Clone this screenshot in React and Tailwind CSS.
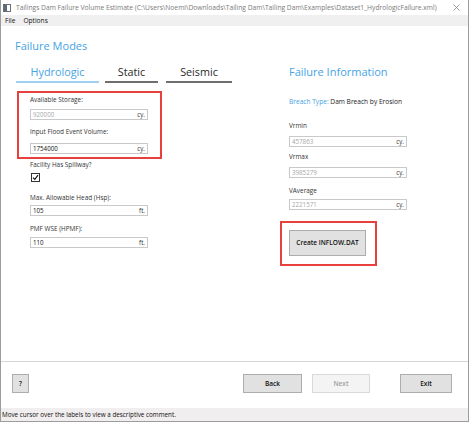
import React from "react";

const F = { fontFamily: '"Open Sans", "Noto Sans", sans-serif' };

function Input({ value, unit, disabled, w = "w-[118px]" }) {
  return (
    <div className={`${w} h-[11px] border border-[#c9c9c9] bg-white flex items-center justify-between px-[2px]`}>
      <span className={`text-[6.2px] leading-[8px] ${disabled ? "text-[#a6a6a6]" : "text-[#111]"}`}>{value}</span>
      <span className="text-[6.2px] leading-[8px] text-[#333]">{unit}</span>
    </div>
  );
}

function Label({ children, className = "" }) {
  return <div className={`text-[6.4px] leading-[8px] h-[8px] text-[#333] whitespace-nowrap ${className}`}>{children}</div>;
}

function Btn({ children, className = "", disabled }) {
  return (
    <div
      className={`h-[19px] flex items-center justify-center text-[6.5px] font-semibold border ${
        disabled ? "bg-[#f4f4f4] border-[#d9d9d9] text-[#a0a0a0] font-normal" : "bg-[#e1e1e1] border-[#adadad] text-[#111]"
      } ${className}`}
    >
      {children}
    </div>
  );
}

export default function App() {
  return (
    <div style={F} className="w-[469px] h-[422px] bg-white border-l border-r border-b border-[#9c9c9c] flex flex-col overflow-hidden">
      {/* Title bar */}
      <div className="h-[15px] flex items-center shrink-0 relative">
        <svg width="8" height="8" viewBox="0 0 8 8" className="ml-[2px]">
          <rect x="0.5" y="0.5" width="7" height="7" fill="#fff" stroke="#6d6d6d" />
          <rect x="1" y="1" width="3" height="6" fill="#5a6b7d" />
        </svg>
        <div className="ml-[5px] text-[6.7px] leading-[8px] text-[#7a7a7a] whitespace-nowrap">
          Tailings Dam Failure Volume Estimate (C:\Users\Noemi\Downloads\Tailing Dam\Tailing Dam\Examples\Dataset1_HydrologicFailure.xml)
        </div>
        <svg width="7" height="7" viewBox="0 0 7 7" className="absolute right-[8px] top-[4px]">
          <path d="M0.5 0.5 L6.5 6.5 M6.5 0.5 L0.5 6.5" stroke="#8a8a8a" strokeWidth="0.8" />
        </svg>
      </div>
      {/* Menu bar */}
      <div className="h-[11px] bg-[#f0f0f0] flex items-center shrink-0 text-[6.6px] leading-[8px] text-[#111]">
        <span className="ml-[4px]">File</span>
        <span className="ml-[8px]">Options</span>
      </div>
      {/* Content */}
      <div className="h-[335px] flex shrink-0">
        {/* Left column */}
        <div className="w-[288px] pl-[14px] shrink-0">
          <div className="mt-[12px] h-[16px] leading-[16px] text-[11px] text-[#45a3e6]">Failure Modes</div>
          <div className="mt-[11px] flex ml-[1px]">
            <div className="w-[83px]">
              <div className="h-[14px] leading-[14px] text-[10.8px] text-center text-[#45a3e6]">Hydrologic</div>
              <div className="mt-[2px] h-[2px] bg-[#9fd0f3]" />
            </div>
            <div className="w-[53px] ml-[6px]">
              <div className="h-[14px] leading-[14px] text-[10.8px] text-center text-[#2a2a2a]">Static</div>
              <div className="mt-[2px] h-[2px] bg-[#6f6f6f]" />
            </div>
            <div className="w-[66px] ml-[8px]">
              <div className="h-[14px] leading-[14px] text-[10.8px] text-center text-[#2a2a2a]">Seismic</div>
              <div className="mt-[2px] h-[2px] bg-[#6f6f6f]" />
            </div>
          </div>
          <div className="mt-[8px] ml-[2px] w-[145px] h-[68px] border-2 border-[#e8413d] pl-[11px] pt-[3px]">
            <Label>Available Storage:</Label>
            <div className="mt-[5px]"><Input value="920000" unit="cy." disabled /></div>
            <Label className="mt-[8px]">Input Flood Event Volume:</Label>
            <div className="mt-[7px]"><Input value="1754000" unit="cy." /></div>
          </div>
          <div className="ml-[15px]">
            <Label className="mt-[2px]">Facility Has Spillway?</Label>
            <div className="mt-[4px] ml-[1px] w-[9px] h-[9px] border border-[#333] bg-white flex items-center justify-center">
              <svg width="7" height="7" viewBox="0 0 7 7">
                <path d="M1 3.6 L2.8 5.4 L6 1.2" fill="none" stroke="#111" strokeWidth="1.1" />
              </svg>
            </div>
            <Label className="mt-[12px]">Max. Allowable Head (Hsp):</Label>
            <div className="mt-[3px]"><Input value="105" unit="ft." /></div>
            <Label className="mt-[9px]">PMF WSE (HPMF):</Label>
            <div className="mt-[4px]"><Input value="110" unit="ft." /></div>
          </div>
        </div>
        {/* Right column */}
        <div className="flex-1">
          <div className="mt-[38px] h-[16px] leading-[16px] text-[11px] text-[#45a3e6]">Failure Information</div>
          <div className="mt-[18px] h-[8px] text-[6.6px] leading-[8px] whitespace-nowrap">
            <span className="text-[#45a3e6]">Breach Type:</span>
            <span className="text-[#222]"> Dam Breach by Erosion</span>
          </div>
          <Label className="mt-[16px]">Vrmin</Label>
          <div className="mt-[6px]"><Input value="457863" unit="cy." disabled /></div>
          <Label className="mt-[6px]">Vrmax</Label>
          <div className="mt-[6px]"><Input value="3985279" unit="cy." disabled /></div>
          <Label className="mt-[9px]">VAverage</Label>
          <div className="mt-[4px]"><Input value="2221571" unit="cy." disabled /></div>
          <div className="mt-[11px] -ml-[9px] w-[97px] h-[45px] border-2 border-[#e8413d] pl-[7px] pt-[7px]">
            <Btn className="w-[77px] h-[26px]">Create INFLOW.DAT</Btn>
          </div>
        </div>
      </div>
      {/* Separator */}
      <div className="h-[1px] bg-[#d6d6d6] shrink-0" />
      {/* Buttons */}
      <div className="h-[46px] flex items-start pt-[12px] shrink-0">
        <Btn className="ml-[11px] w-[17px] h-[19px]">?</Btn>
        <Btn className="ml-[214px] w-[59px]">Back</Btn>
        <Btn className="ml-[10px] w-[58px]" disabled>Next</Btn>
        <Btn className="ml-[30px] w-[52px] font-normal">Exit</Btn>
      </div>
      {/* Status bar */}
      <div className="h-[13px] bg-[#f0eeee] flex items-center shrink-0 text-[6.3px] leading-[8px] text-[#111] pl-[1px]">
        Move cursor over the labels to view a descriptive comment.
      </div>
    </div>
  );
}
